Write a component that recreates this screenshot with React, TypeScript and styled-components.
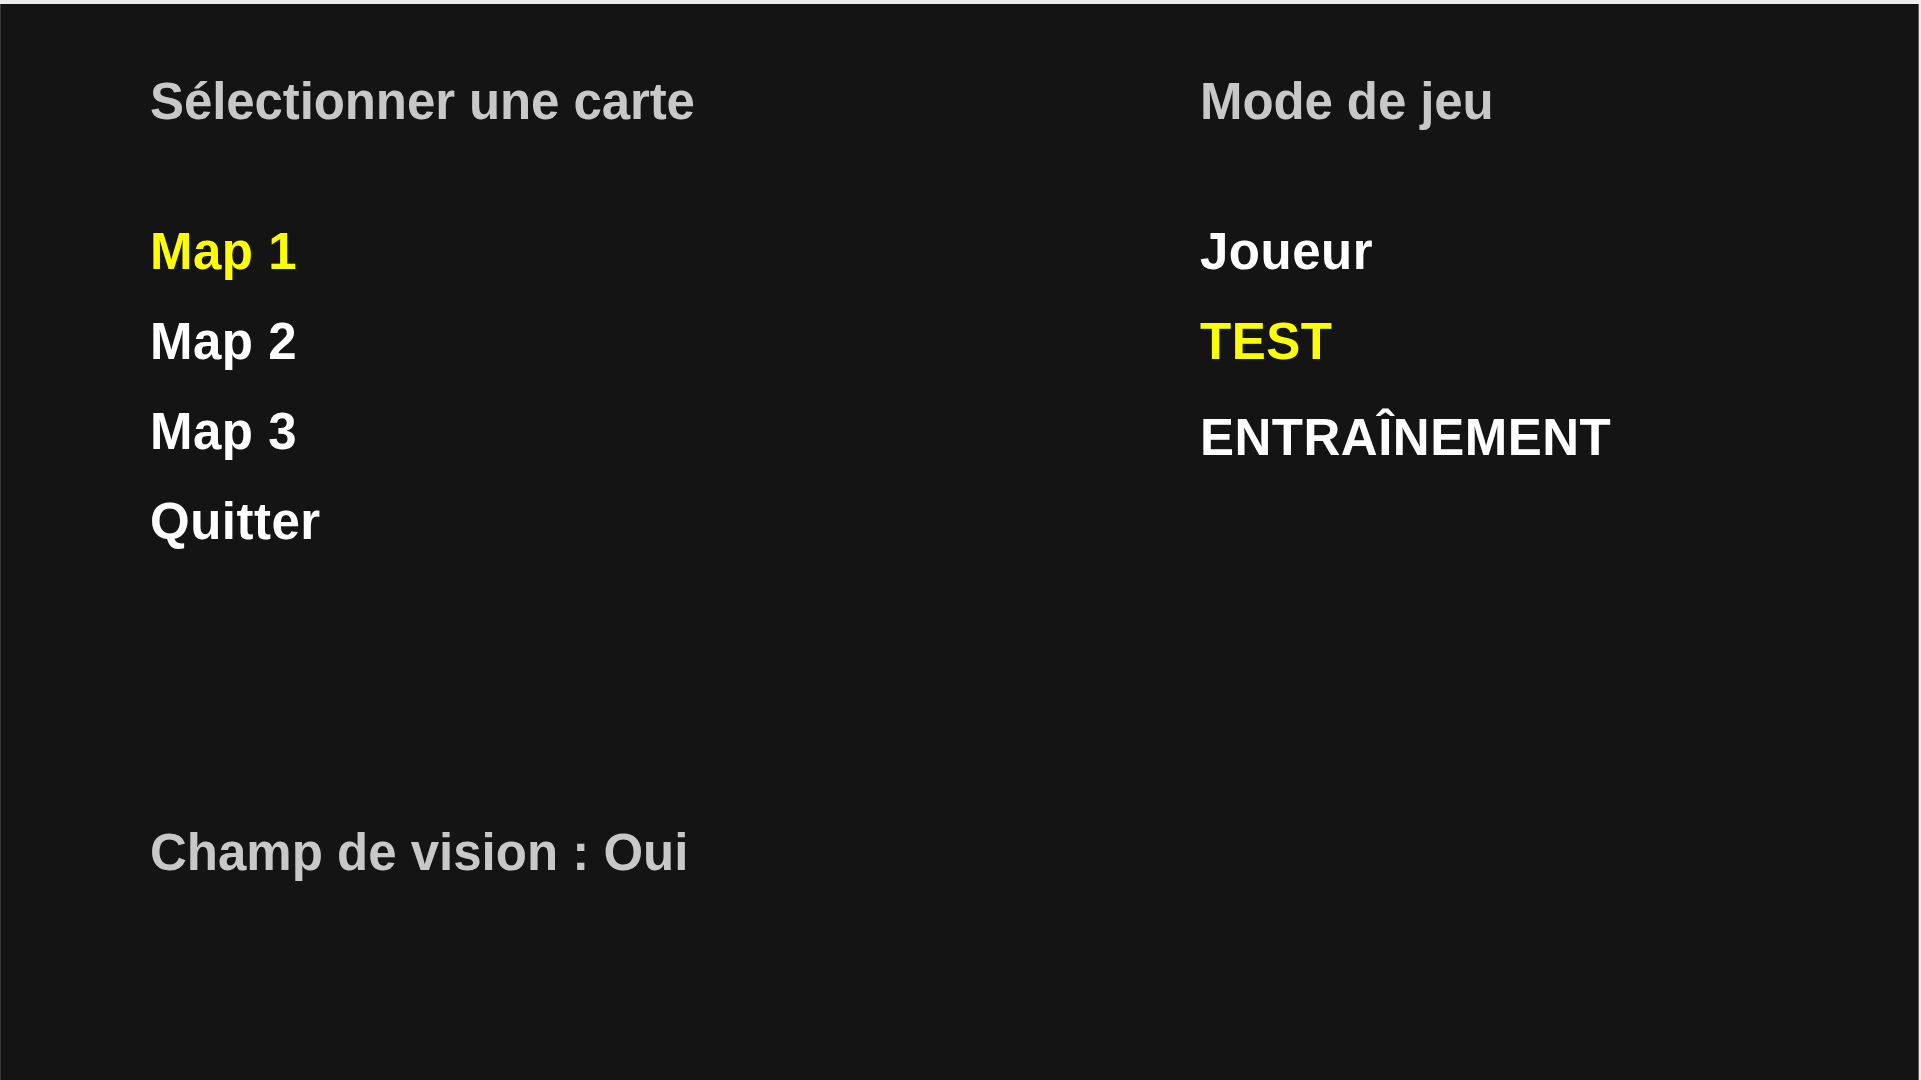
import styled, { createGlobalStyle } from "styled-components";

const GlobalStyle = createGlobalStyle`
    html, body {
        margin: 0;
        padding: 0;
        background: #e9ebee;
        overflow: hidden;
    }
    * {
        box-sizing: border-box;
    }
`;

type MenuEntry = {
    label: string;
    selected?: boolean;
    dip?: number;
};

const maps: MenuEntry[] = [
    { label: "Map 1", selected: true },
    { label: "Map 2" },
    { label: "Map 3" },
    { label: "Quitter" },
];

const modes: MenuEntry[] = [
    { label: "Joueur" },
    { label: "TEST", selected: true },
    { label: "ENTRAÎNEMENT", dip: 6 },
];

export default function App() {
    return (
        <>
            <GlobalStyle />
            <Screen>
                <Columns>
                    <Column>
                        <Heading>Sélectionner une carte</Heading>
                        <Menu>
                            {maps.map((m) => (
                                <Item key={m.label} $selected={!!m.selected}>
                                    {m.label}
                                </Item>
                            ))}
                        </Menu>
                    </Column>
                    <Column>
                        <Heading>Mode de jeu</Heading>
                        <Menu>
                            {modes.map((m) => (
                                <Item key={m.label} $selected={!!m.selected} $dip={m.dip ?? 0}>
                                    {m.label}
                                </Item>
                            ))}
                        </Menu>
                    </Column>
                </Columns>
                <Option>Champ de vision : Oui</Option>
            </Screen>
        </>
    );
}

const Screen = styled.div`
    margin-top: 4px;
    width: 1919px;
    height: 1076px;
    background-color: #141414;
    border-left: 1px solid #3a3a3a;
    border-right: 1px solid #5c5c5c;
    padding: 68px 0 0 149px;
    display: flex;
    flex-direction: column;
    font-family: "Liberation Sans", Arial, sans-serif;
    font-weight: 700;
    font-size: 51px;
`;

const Columns = styled.div`
    display: grid;
    grid-template-columns: 1050px 1fr;
`;

const Column = styled.div`
    display: flex;
    flex-direction: column;
`;

const Heading = styled.div`
    color: #c8c8c8;
    line-height: 60px;
    white-space: nowrap;
    letter-spacing: -0.1px;
`;

const Menu = styled.div`
    display: flex;
    flex-direction: column;
    margin-top: 75px;
`;

const Item = styled.div<{ $selected: boolean; $dip?: number }>`
    line-height: 90px;
    white-space: nowrap;
    letter-spacing: 0.5px;
    color: ${({ $selected }) => ($selected ? "#ffff00" : "#ffffff")};
    padding-top: ${({ $dip }) => $dip ?? 0}px;
    margin-bottom: ${({ $dip }) => -($dip ?? 0)}px;
`;

const Option = styled.div`
    margin-top: 256px;
    color: #c8c8c8;
    line-height: 60px;
    white-space: nowrap;
`;
